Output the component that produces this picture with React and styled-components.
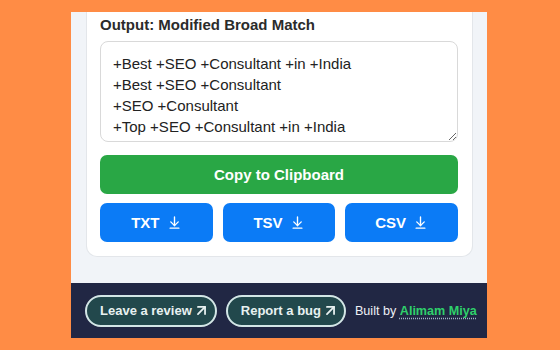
import React from "react";
import styled, { createGlobalStyle } from "styled-components";
import { ArrowDownToLine, ArrowUpRight } from "lucide-react";

const Global = createGlobalStyle`
  html, body { margin: 0; padding: 0; }
  body {
    background: #ff8c45;
    font-family: "Liberation Sans", Arial, sans-serif;
    width: 560px;
    height: 350px;
    overflow: hidden;
  }
`;

const Stage = styled.div`
  padding: 12px 0 0 71px;
`;

const Frame = styled.div`
  width: 416px;
  background: #f1f4f8;
`;

const Body = styled.div`
  padding: 0 14px 26px 15px;
`;

const Card = styled.div`
  background: #ffffff;
  border: 1px solid #e3e6ea;
  border-top: none;
  border-radius: 0 0 11px 11px;
  padding: 0 14px 14px 13px;
  display: flex;
  flex-direction: column;
`;

const Heading = styled.h2`
  margin: 0 0 6px;
  padding-top: 3px;
  font-size: 15px;
  line-height: 20px;
  font-weight: 700;
  color: #2b2b2b;
`;

const Output = styled.textarea`
  box-sizing: border-box;
  width: 100%;
  height: 101px;
  margin: 0;
  padding: 11px 12px;
  border: 1px solid #d9d9d9;
  border-radius: 8px;
  font-family: "Liberation Sans", Arial, sans-serif;
  font-size: 15px;
  line-height: 21px;
  color: #222;
  background: #fff;
  outline: none;
  overflow: hidden;
  resize: vertical;
`;

const Button = styled.button`
  box-sizing: border-box;
  height: 39px;
  border: none;
  border-radius: 7px;
  background: ${(p) => p.$bg};
  color: #fff;
  font-family: "Liberation Sans", Arial, sans-serif;
  font-size: 15px;
  font-weight: 700;
  display: flex;
  align-items: center;
  justify-content: center;
  gap: 7px;
  padding: 0;
  cursor: pointer;
`;

const CopyButton = styled(Button)`
  margin-top: 13px;
  width: 100%;
`;

const DownloadRow = styled.div`
  margin-top: 9px;
  display: grid;
  grid-template-columns: repeat(3, 1fr);
  gap: 10px;
`;

const Footer = styled.footer`
  background: #212744;
  height: 55px;
  box-sizing: border-box;
  padding: 0 0 0 14px;
  display: flex;
  align-items: center;
  gap: 9px;
`;

const Pill = styled.a`
  box-sizing: border-box;
  height: 32px;
  display: flex;
  align-items: center;
  gap: 1px;
  padding: 0 5px 0 13px;
  border: 2px solid #d3e6e6;
  border-radius: 16px;
  background: #22484c;
  color: #e8f1f1;
  font-size: 13px;
  font-weight: 700;
  text-decoration: none;
  white-space: nowrap;
`;

const Credit = styled.span`
  margin-left: 0;
  color: #eef0f6;
  font-size: 12.6px;
  white-space: nowrap;
`;

const Author = styled.a`
  color: #2fd06b;
  font-weight: 700;
  text-decoration: underline dotted #9fb4c8;
  text-underline-offset: 3px;
`;

const text = [
  "+Best +SEO +Consultant +in +India",
  "+Best +SEO +Consultant",
  "+SEO +Consultant",
  "+Top +SEO +Consultant +in +India",
].join("\n");

export default function App() {
  return (
    <>
      <Global />
      <Stage>
        <Frame>
          <Body>
            <Card>
              <Heading>Output: Modified Broad Match</Heading>
              <Output readOnly value={text} />
              <CopyButton $bg="#29a745">Copy to Clipboard</CopyButton>
              <DownloadRow>
                {["TXT", "TSV", "CSV"].map((f) => (
                  <Button key={f} $bg="#0b7bf6">
                    {f}
                    <ArrowDownToLine size={15} strokeWidth={2.2} />
                  </Button>
                ))}
              </DownloadRow>
            </Card>
          </Body>
          <Footer>
            <Pill href="#">
              Leave a review <ArrowUpRight size={17} strokeWidth={2.5} />
            </Pill>
            <Pill href="#">
              Report a bug <ArrowUpRight size={17} strokeWidth={2.5} />
            </Pill>
            <Credit>
              Built by <Author href="#">Alimam Miya</Author>
            </Credit>
          </Footer>
        </Frame>
      </Stage>
    </>
  );
}
